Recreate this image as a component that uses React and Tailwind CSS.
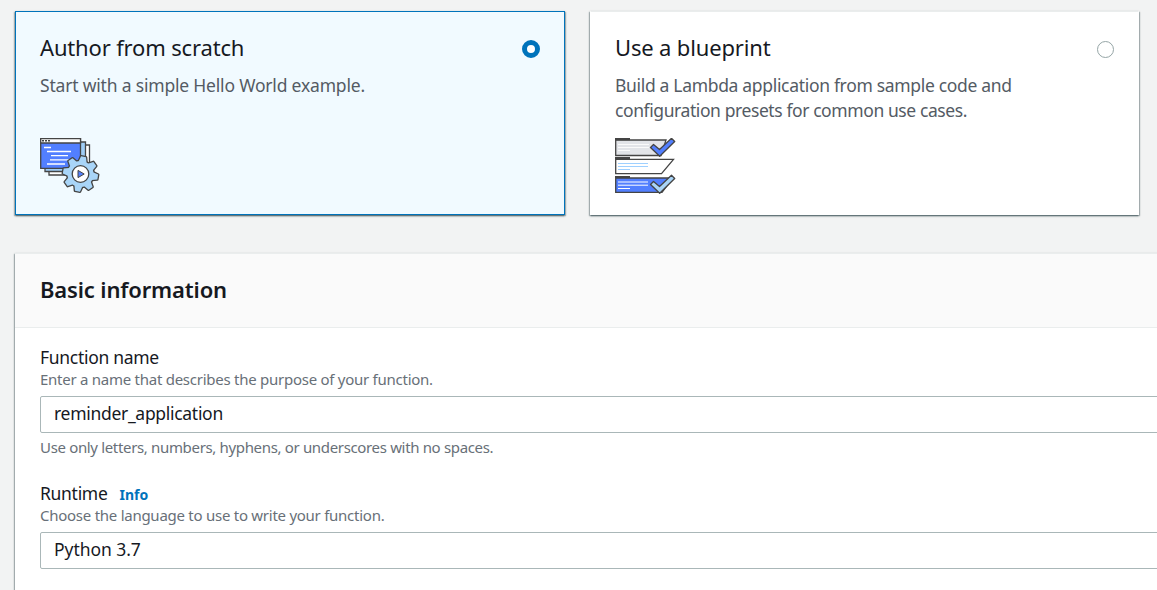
import React from "react";

function Radio({ checked }) {
  return checked ? (
    <span className="size-[18px] shrink-0 rounded-full border-[5px] border-[#0073bb] bg-white" />
  ) : (
    <span className="mt-px size-[17px] shrink-0 rounded-full border border-[#95a5a6] bg-white" />
  );
}

const teeth = [0, 45, 90, 135, 180, 225, 270, 315];

function ScratchIcon() {
  return (
    <svg width="60" height="56" viewBox="0 0 60 56" className="block">
      <g stroke="#444" strokeWidth="1.3">
        <path d="M9 7H49.500V37H9Z" fill="#fff" />
        <path d="M5 4H45.500V33.500H5Z" fill="#9fcdf5" />
        <path d="M.7 .7H40.500V30.300H.7Z" fill="#527fff" />
        <path d="M.7 .7H40.500V5H.7Z" fill="#fff" />
      </g>
      <path d="M2 2.800H4M5 2.800H7M8 2.800H10" stroke="#444" strokeWidth="1.600" />
      <path d="M4 9.500H11M7 13.500H31M11 17.700H28M10 21.800H31M7 26H25" stroke="#fff" strokeWidth="1.300" />
      <g transform="translate(40.500 36)">
        <g fill="#a9d5f8" stroke="#444" strokeWidth="2.600" strokeLinejoin="round">
          <circle r="13" />
          {teeth.map((a) => (
            <path key={a} d="M-4 -12L-2.500 -17.500H2.500L4 -12Z" transform={`rotate(${a + 10})`} />
          ))}
        </g>
        <g fill="#a9d5f8">
          <circle r="13" />
          {teeth.map((a) => (
            <path key={a} d="M-4 -12L-2.500 -17.500H2.500L4 -12Z" transform={`rotate(${a + 10})`} />
          ))}
        </g>
        <circle r="8.300" fill="#fff" stroke="#444" strokeWidth="1.300" />
        <path d="M-2.500 -3.600L3.700 0L-2.500 3.600Z" fill="#527fff" stroke="#444" />
      </g>
    </svg>
  );
}

function BlueprintIcon() {
  return (
    <svg width="61" height="56" viewBox="0 0 61 56" className="block">
      <g stroke="#444" strokeWidth="1.300">
        <path d="M.7 2H51L46 17.500H.7Z" fill="#e2e4e8" />
        <path d="M.7 21.300H58.500L46.500 35.700H.7Z" fill="#fff" />
        <path d="M.7 40H58L47 54.300H.7Z" fill="#527fff" />
      </g>
      <path d="M0 1.200H15M0 20.200H15M0 39H15" stroke="#444" strokeWidth="2.200" />
      <path d="M3 6.500H34M3 9.500H34M3 12.500H15" stroke="#fafafa" strokeWidth="1" />
      <path d="M3 25.500H33M3 28.500H33M3 31.500H15" stroke="#9fd0ff" strokeWidth="1" />
      <path d="M3 44H33M3 47.200H33M3 50.500H15" stroke="#fff" strokeWidth="1" />
      <path d="M35.500 9.500L38.500 6.500L44.500 11.500L56.500 .3L59.700 3.500L44.700 18.300Z" fill="#527fff" stroke="#444" strokeWidth="1.300" strokeLinejoin="round" />
      <path d="M35.500 46.500L38.500 43.500L44.500 48.500L56.500 37.300L59.700 40.500L44.700 55.200Z" fill="#a9d5f8" stroke="#444" strokeWidth="1.300" strokeLinejoin="round" />
    </svg>
  );
}

const shadow =
  "shadow-[0_1px_2px_0_rgba(0,28,36,0.5),1px_1px_1px_0_rgba(0,28,36,0.2),-1px_1px_1px_0_rgba(0,28,36,0.2)]";

function OptionCard({ title, checked, children, icon }) {
  return (
    <section
      className={`flex h-[204px] shrink-0 flex-col border px-[24px] pb-[20px] ${shadow} ${
        checked ? "w-[550px] border-[#0073bb] bg-[#f1faff]" : "w-[549px] border-white border-t-[#eaeded] bg-white"
      }`}
    >
      <div className="flex h-[50px] items-start justify-between pt-[28px]">
        <h2 className="-mt-[8px] text-[22px] leading-[30px] tracking-[-0.16px] text-[#16191f]">{title}</h2>
        <Radio checked={checked} />
      </div>
      <p className="mt-[11px] text-[17.5px] leading-[25px] whitespace-nowrap text-[#545b64]">{children}</p>
      <div className="mt-auto">{icon}</div>
    </section>
  );
}

function Field({ label, info, hint, value, note }) {
  return (
    <div>
      <div className="flex h-[25px] items-baseline text-[17.5px] leading-[25px]">
        <label className="tracking-[-0.3px] text-[#16191f]">{label}</label>
        {info && <a className="ml-[12px] text-[14px] font-bold text-[#0073bb]">{info}</a>}
      </div>
      <p className="text-[15px] leading-[19px] tracking-[-0.26px] text-[#687078]">{hint}</p>
      <div className="mt-[7px] flex h-[37px] w-[1200px] items-center rounded-[2px] border border-[#aab7b8] bg-white pb-[2px] pl-[13px] text-[17.5px] text-[#16191f]">
        {value}
      </div>
      {note && <p className="mt-[5px] text-[15px] leading-[19px] tracking-[-0.34px] text-[#687078]">{note}</p>}
    </div>
  );
}

export default function App() {
  return (
    <main className="h-[590px] w-full overflow-hidden bg-[#f2f3f3] pt-[11px] pl-[15px] font-['Noto_Sans',sans-serif]">
      <div className="flex gap-[25px]">
        <OptionCard title="Author from scratch" checked icon={<ScratchIcon />}>
          <span className="tracking-[-0.19px]">Start with a simple Hello World example.</span>
        </OptionCard>
        <OptionCard title="Use a blueprint" icon={<BlueprintIcon />}>
          <span className="block tracking-[-0.32px]">Build a Lambda application from sample code and</span>
          <span className="block tracking-[-0.41px]">configuration presets for common use cases.</span>
        </OptionCard>
      </div>
      <section className={`mt-[38px] h-[400px] w-[1250px] border-t border-[#eaeded] bg-white ${shadow}`}>
        <header className="flex h-[74px] items-center border-b border-[#eaeded] bg-[#fafafa] pb-[2px] pl-[25px]">
          <h2 className="text-[22px] font-semibold tracking-[-0.15px] text-[#16191f]">Basic information</h2>
        </header>
        <div className="flex flex-col gap-[24px] pt-[17px] pl-[25px]">
          <Field
            label="Function name"
            hint="Enter a name that describes the purpose of your function."
            value={<span className="tracking-[-0.3px]">reminder_application</span>}
            note="Use only letters, numbers, hyphens, or underscores with no spaces."
          />
          <Field
            label="Runtime"
            info="Info"
            hint="Choose the language to use to write your function."
            value={<span className="tracking-[-0.05px]">Python 3.7</span>}
          />
        </div>
      </section>
    </main>
  );
}
